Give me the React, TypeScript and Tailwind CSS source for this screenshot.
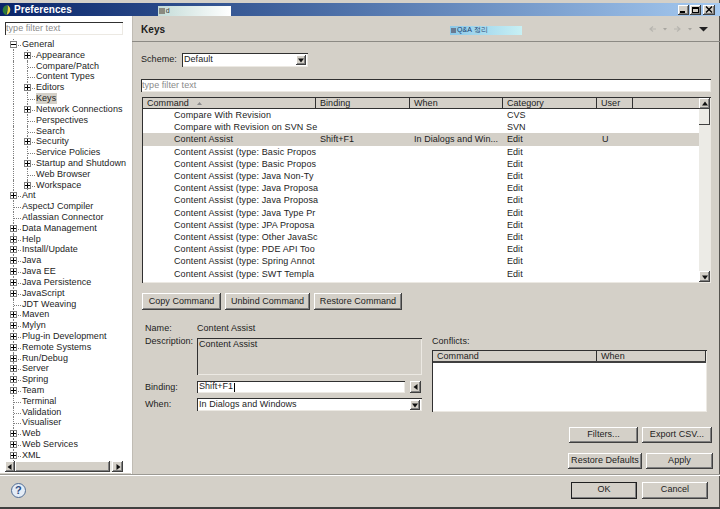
const raised =
  "bg-[#d4d0c8] shadow-[inset_-1px_-1px_0_#404040,inset_1px_1px_0_#ffffff,inset_-2px_-2px_0_#808080]";
const sunken = "shadow-[inset_1px_1px_0_#303030,inset_-1px_-1px_0_#ece9e3]";

type TreeItem = { label: string; level: 0 | 1; kind: "open" | "closed" | "leaf"; selected?: boolean };

const tree: TreeItem[] = [
  { label: "General", level: 0, kind: "open" },
  { label: "Appearance", level: 1, kind: "closed" },
  { label: "Compare/Patch", level: 1, kind: "leaf" },
  { label: "Content Types", level: 1, kind: "leaf" },
  { label: "Editors", level: 1, kind: "closed" },
  { label: "Keys", level: 1, kind: "leaf", selected: true },
  { label: "Network Connections", level: 1, kind: "closed" },
  { label: "Perspectives", level: 1, kind: "leaf" },
  { label: "Search", level: 1, kind: "leaf" },
  { label: "Security", level: 1, kind: "closed" },
  { label: "Service Policies", level: 1, kind: "leaf" },
  { label: "Startup and Shutdown", level: 1, kind: "closed" },
  { label: "Web Browser", level: 1, kind: "leaf" },
  { label: "Workspace", level: 1, kind: "closed" },
  { label: "Ant", level: 0, kind: "closed" },
  { label: "AspectJ Compiler", level: 0, kind: "leaf" },
  { label: "Atlassian Connector", level: 0, kind: "leaf" },
  { label: "Data Management", level: 0, kind: "closed" },
  { label: "Help", level: 0, kind: "closed" },
  { label: "Install/Update", level: 0, kind: "closed" },
  { label: "Java", level: 0, kind: "closed" },
  { label: "Java EE", level: 0, kind: "closed" },
  { label: "Java Persistence", level: 0, kind: "closed" },
  { label: "JavaScript", level: 0, kind: "closed" },
  { label: "JDT Weaving", level: 0, kind: "leaf" },
  { label: "Maven", level: 0, kind: "closed" },
  { label: "Mylyn", level: 0, kind: "closed" },
  { label: "Plug-in Development", level: 0, kind: "closed" },
  { label: "Remote Systems", level: 0, kind: "closed" },
  { label: "Run/Debug", level: 0, kind: "closed" },
  { label: "Server", level: 0, kind: "closed" },
  { label: "Spring", level: 0, kind: "closed" },
  { label: "Team", level: 0, kind: "closed" },
  { label: "Terminal", level: 0, kind: "leaf" },
  { label: "Validation", level: 0, kind: "leaf" },
  { label: "Visualiser", level: 0, kind: "leaf" },
  { label: "Web", level: 0, kind: "closed" },
  { label: "Web Services", level: 0, kind: "closed" },
  { label: "XML", level: 0, kind: "closed" },
];

// the column cuts these off in the screenshot, so only the visible part is kept
const commands = [
  "Compare With Revision",
  "Compare with Revision on SVN Se",
  "Content Assist",
  "Content Assist (type: Basic Propos",
  "Content Assist (type: Basic Propos",
  "Content Assist (type: Java Non-Ty",
  "Content Assist (type: Java Proposa",
  "Content Assist (type: Java Proposa",
  "Content Assist (type: Java Type Pr",
  "Content Assist (type: JPA Proposa",
  "Content Assist (type: Other JavaSc",
  "Content Assist (type: PDE API Too",
  "Content Assist (type: Spring Annot",
  "Content Assist (type: SWT Templa",
];

function Arrow({ dir, className = "" }: { dir: "up" | "down" | "left" | "right"; className?: string }) {
  const points = {
    up: "4,1.5 7,5.5 1,5.5",
    down: "1,2.5 7,2.5 4,6.5",
    left: "5.5,1 5.5,7 1.5,4",
    right: "2.5,1 2.5,7 6.5,4",
  }[dir];
  return (
    <svg width="8" height="8" viewBox="0 0 8 8" className={className}>
      <polygon points={points} fill="#111111" />
    </svg>
  );
}

function ArrowButton({ dir, className = "" }: { dir: "up" | "down" | "left" | "right"; className?: string }) {
  return (
    <div className={`${raised} flex items-center justify-center shrink-0 ${className}`}>
      <Arrow dir={dir} />
    </div>
  );
}

function Button({ label, className = "" }: { label: string; className?: string }) {
  return <div className={`${raised} flex items-center justify-center h-[17px] ${className}`}>{label}</div>;
}

function TreeRow({ item }: { item: TreeItem }) {
  return (
    <div className="flex h-[10.82px] leading-[11px] whitespace-nowrap">
      {item.level === 1 && <div className="w-[14px] shrink-0 border-l border-dotted border-[#808080]" />}
      <div className="relative w-[9px] shrink-0 border-l border-dotted border-[#808080]">
        <div className="absolute left-0 top-[6px] w-[7px] border-t border-dotted border-[#808080]" />
        {item.kind !== "leaf" && (
          <div className="absolute left-[-4px] top-[2px] w-[7px] h-[7px] bg-white border border-[#808080] flex items-center justify-center">
            <div className="relative w-[5px] h-[5px]">
              <div className="absolute left-0 top-[2px] w-[5px] h-px bg-black" />
              {item.kind === "closed" && <div className="absolute left-[2px] top-0 w-px h-[5px] bg-black" />}
            </div>
          </div>
        )}
      </div>
      <span className={item.selected ? "bg-[#d4d0c8] pr-px" : ""}>{item.label}</span>
    </div>
  );
}

function HeaderCell({ label, sort }: { label: string; sort?: boolean }) {
  return (
    <div className="flex items-center gap-[7px] pl-[4px] border-r border-[#303030] overflow-hidden">
      {label}
      {sort && (
        <svg width="7" height="5" viewBox="0 0 7 5">
          <polygon points="3.5,1 6,4 1,4" fill="#8a8a8a" />
        </svg>
      )}
    </div>
  );
}

export default function App() {
  return (
    <div className="w-[720px] h-[509px] overflow-hidden bg-[#d4d0c8] shadow-[inset_-1px_0_0_#55534f] flex flex-col pt-[3px] font-['Liberation_Sans',Arial,sans-serif] text-[9px] text-[#1c1c1c] tracking-[0.05px]">
      {/* Title bar */}
      <div className="h-[13px] shrink-0 flex items-center bg-gradient-to-r from-[#0a246a] to-[#a6caf0]">
        <svg width="12" height="12" viewBox="0 0 12 12" className="ml-[1px] shrink-0">
          <path d="M6 1C2.5 2 1 5 2 8c.5 1.5 2 3 3 3 1-3 1.5-7 1-10z" fill="#2f7d3a" />
          <path d="M6.5 1c3 2 3.5 5 2 7.5-.7 1.2-2 2-3 2.5 1-3 1.5-6.5 1-10z" fill="#e6d53c" />
        </svg>
        <span className="ml-[1px] font-bold text-[10px] text-white">Preferences</span>
        <div className="ml-[86px] w-[73px] h-[10px] mt-[3px] bg-gradient-to-r from-[#c4dcd8] to-[#ffffff] flex items-center text-[7px] text-[#333333] pl-[1px]">
          <span className="w-[6px] h-[6px] bg-[#8a8a80] mr-[1px]" />d
        </div>
        <div className="ml-auto mr-[5px] flex gap-[1px]">
          <div className={`${raised} w-[11px] h-[10px] flex items-end justify-start pl-[2px] pb-[2px]`}>
            <div className="w-[5px] h-[2px] bg-black" />
          </div>
          <div className={`${raised} w-[11px] h-[10px] flex items-center justify-center`}>
            <div className="w-[7px] h-[6px] border border-black border-t-2" />
          </div>
          <div className={`${raised} w-[12px] h-[10px] ml-[1px] flex items-center justify-center`}>
            <svg width="8" height="7" viewBox="0 0 8 7">
              <path d="M1 0.5 7 6.5M7 0.5 1 6.5" stroke="#000000" strokeWidth="1.4" />
            </svg>
          </div>
        </div>
      </div>

      <div className="flex flex-1 min-h-0">
        {/* Left tree */}
        <div className="w-[131px] shrink-0 bg-white flex flex-col pt-[6px] h-[457px]">
          <div className={`${sunken} ml-[5px] w-[118px] h-[13px] shrink-0 bg-white flex items-center pl-[1px] text-[#8a8a8a]`}>
            type filter text
          </div>
          <div className="mt-[4px] pl-[13px] h-[422px] overflow-hidden">
            {tree.map((item, i) => (
              <TreeRow key={i} item={item} />
            ))}
          </div>
          <div className="ml-[5px] w-[118px] flex h-[11px] shrink-0 bg-[#ecebe6]">
            <ArrowButton dir="left" className="w-[10px]" />
            <div className={`${raised} w-[95px]`} />
            <div className="w-[2px]" />
            <ArrowButton dir="right" className="w-[11px]" />
          </div>
        </div>

        {/* Right panel */}
        <div className="flex-1 min-w-0 flex flex-col pl-[9px] pr-[7px] border-l border-[#ffffff] shadow-[inset_1px_0_0_#c0bcb4]">
          <div className="-ml-[9px] -mr-[7px] pl-[9px] pr-[11px] h-[26px] shrink-0 flex items-center border-b border-[#8c8a84]">
            <span className="font-bold text-[10px] mt-[2px] w-[309px]">Keys</span>
            <div className="w-[72px] h-[9px] mt-[4px] bg-gradient-to-r from-[#8cc8e8] to-[#c8f0f4] flex items-center text-[7px] text-[#1c3c6c] pl-[1px]">
              <span className="w-[5px] h-[5px] bg-[#6a7a90] mr-[1px]" />Q&amp;A 정리
            </div>
            <svg width="60" height="8" viewBox="0 0 60 8" className="ml-auto">
              <path d="M1 4h6M4 1.5 1 4l3 2.5" stroke="#b8b6b0" strokeWidth="1.2" fill="none" />
              <polygon points="14,3 18,3 16,5.5" fill="#a8a6a0" />
              <path d="M25 4h6M28 1.5 31 4l-3 2.5" stroke="#b8b6b0" strokeWidth="1.2" fill="none" />
              <polygon points="39,3 43,3 41,5.5" fill="#a8a6a0" />
              <polygon points="50,2 59,2 54.5,6.5" fill="#222222" />
            </svg>
          </div>

          {/* Scheme */}
          <div className="mt-[11px] h-[14px] flex items-center shrink-0">
            <span className="w-[41px]">Scheme:</span>
            <div className={`${sunken} w-[126px] h-[14px] bg-white flex items-center pl-[2px] pr-[2px]`}>
              Default
              <ArrowButton dir="down" className="ml-auto w-[10px] h-[10px]" />
            </div>
          </div>

          {/* Filter */}
          <div className={`${sunken} mt-[12px] mr-[2px] h-[13px] shrink-0 bg-white flex items-center pl-[1px] text-[#8a8a8a]`}>
            type filter text
          </div>

          {/* Commands table */}
          <div className={`${sunken} mt-[5px] ml-[1px] mr-[2px] h-[186px] shrink-0 bg-white flex p-px`}>
            <div className="flex-1 min-w-0 flex flex-col">
              <div className="h-[11px] shrink-0 grid grid-cols-[173px_94px_93px_94px_36px_1fr] bg-[#d4d0c8] border-b border-[#303030] leading-[11px]">
                <HeaderCell label="Command" sort />
                <HeaderCell label="Binding" />
                <HeaderCell label="When" />
                <HeaderCell label="Category" />
                <HeaderCell label="User" />
                <div />
              </div>
              {commands.map((command, i) => {
                const selected = i === 2;
                return (
                  <div
                    key={i}
                    className={`h-[12.2px] shrink-0 grid grid-cols-[173px_94px_93px_94px_36px_1fr] items-center whitespace-nowrap leading-[12px] ${selected ? "bg-[#d4d0c8]" : ""}`}
                  >
                    <div className="pl-[31px] tracking-[0.12px]">{command}</div>
                    <div className="pl-[4px]">{selected ? "Shift+F1" : ""}</div>
                    <div className="pl-[4px]">{selected ? "In Dialogs and Win..." : ""}</div>
                    <div className="pl-[4px]">{i === 0 ? "CVS" : i === 1 ? "SVN" : "Edit"}</div>
                    <div className="pl-[5px]">{selected ? "U" : ""}</div>
                    <div />
                  </div>
                );
              })}
            </div>
            <div className="w-[11px] shrink-0 flex flex-col bg-[#ecebe6]">
              <ArrowButton dir="up" className="h-[11px]" />
              <div className="h-[16px] shrink-0 shadow-[inset_-1px_-1px_0_#404040]" />
              <ArrowButton dir="down" className="h-[11px] mt-auto" />
            </div>
          </div>

          {/* Command buttons */}
          <div className="mt-[10px] ml-[1px] flex gap-[4px] shrink-0">
            <Button label="Copy Command" className="w-[79px]" />
            <Button label="Unbind Command" className="w-[85px]" />
            <Button label="Restore Command" className="w-[88px]" />
          </div>

          {/* Details + conflicts */}
          <div className="mt-[13px] flex shrink-0">
            <div className="w-[277px] shrink-0 ml-[4px] grid grid-cols-[52px_1fr] content-start">
              <div className="h-[10px] pt-px flex items-center">Name:</div>
              <div className="h-[10px] pt-px flex items-center">Content Assist</div>
              <div className="mt-[2px] h-[10px] mb-[30px]">Description:</div>
              <div className={`${sunken} mt-[5px] h-[37px] pl-[2px] pt-[1px] leading-[11px]`}>Content Assist</div>
              <div className="mt-[6px] h-[12px] pt-px flex items-center">Binding:</div>
              <div className="mt-[6px] h-[12px] flex">
                <div className={`${sunken} w-[208px] bg-white flex items-center pl-[2px]`}>
                  Shift+F1<span className="ml-px w-px h-[9px] bg-black" />
                </div>
                <ArrowButton dir="left" className="ml-[5px] w-[11px]" />
              </div>
              <div className="mt-[5px] h-[13px] flex items-center">When:</div>
              <div className={`${sunken} mt-[5px] h-[13px] bg-white flex items-center pl-[2px] pr-[2px]`}>
                In Dialogs and Windows
                <ArrowButton dir="down" className="ml-auto w-[10px] h-[10px]" />
              </div>
            </div>
            <div className="ml-[10px] pt-[13px] w-[275px] shrink-0">
              <div className="h-[10px] leading-[10px]">Conflicts:</div>
              <div className={`${sunken} mt-[4px] h-[62px] bg-white p-px`}>
                <div className="h-[12px] grid grid-cols-[164px_1fr] bg-[#d4d0c8] border-b-2 border-[#404040] leading-[10px]">
                  <div className="pl-[4px] border-r border-[#303030]">Command</div>
                  <div className="pl-[4px] border-r border-[#303030]">When</div>
                </div>
              </div>
            </div>
          </div>

          {/* Page buttons */}
          <div className="mt-[15px] flex justify-end gap-[4px] pr-[1px] shrink-0">
            <Button label="Filters..." className="w-[69px] !h-[16px]" />
            <Button label="Export CSV..." className="w-[70px] !h-[16px]" />
          </div>
          <div className="mt-[10px] flex justify-end gap-[4px] shrink-0">
            <Button label="Restore Defaults" className="w-[74px] !h-[16px]" />
            <Button label="Apply" className="w-[67px] !h-[16px]" />
          </div>
        </div>
      </div>

      {/* Footer */}
      <div className="h-[35px] shrink-0 flex items-center border-t border-[#9c9a94] shadow-[inset_0_1px_0_#ffffff] pb-[2px] pr-[12px] border-b-2 border-b-[#404040]">
        <div className="ml-[11px] w-[15px] h-[15px] rounded-full border border-[#506c94] bg-[#e4ecf6] flex items-center justify-center text-[11px] font-bold text-[#2c4c84] leading-none">
          ?
        </div>
        <div className={`${raised} ml-auto w-[66px] h-[17px] flex items-center justify-center outline outline-1 -outline-offset-1 outline-[#202020]`}>
          OK
        </div>
        <Button label="Cancel" className="ml-[5px] w-[66px]" />
      </div>
    </div>
  );
}
